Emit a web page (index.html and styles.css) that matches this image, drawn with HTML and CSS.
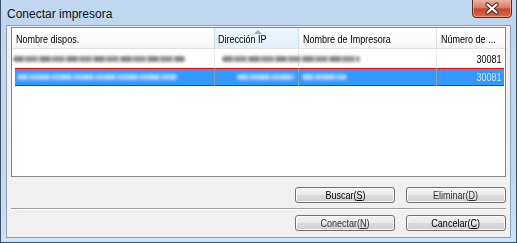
FILE: index.html
```html
<!DOCTYPE html>
<html lang="es">
<head>
<meta charset="utf-8">
<title>Conectar impresora</title>
<link rel="stylesheet" href="styles.css">
</head>
<body>
<div class="window">
  <div class="titlebar">
    <span class="title">Conectar impresora</span>
    <button class="close" aria-label="Cerrar">
      <svg width="40" height="18" viewBox="0 0 40 18">
        <defs>
          <linearGradient id="cg" x1="0" y1="0" x2="0" y2="1">
            <stop offset="0" stop-color="#eab3a5"/>
            <stop offset="0.45" stop-color="#d9765f"/>
            <stop offset="0.5" stop-color="#c8472f"/>
            <stop offset="1" stop-color="#d96a45"/>
          </linearGradient>
        </defs>
        <path d="M0.5 0 V14 Q0.5 17.5 4 17.5 H36 Q39.5 17.5 39.5 14 V0" fill="url(#cg)" stroke="#5e2a22"/>
        <path d="M1.5 0 V13.5 Q1.5 16.5 4.5 16.5 H35.5 Q38.5 16.5 38.5 13.5 V0" fill="none" stroke="#f0b9a8" stroke-opacity="0.6"/>
        <path d="M15.5 4.5 L24.5 12.5 M24.5 4.5 L15.5 12.5" stroke="#4b2119" stroke-width="4.2" stroke-linecap="round"/>
        <path d="M15.5 4.5 L24.5 12.5 M24.5 4.5 L15.5 12.5" stroke="#ffffff" stroke-width="2.2" stroke-linecap="round"/>
      </svg>
    </button>
  </div>
  <div class="client">
    <div class="list">
      <div class="header">
        <div class="hcell"><span class="t">Nombre dispos.</span></div>
        <div class="hcell sorted"><span class="sort-arrow"></span><span class="t">Dirección IP</span></div>
        <div class="hcell"><span class="t">Nombre de Impresora</span></div>
        <div class="hcell last"><span class="t">Número de ...</span></div>
      </div>
      <div class="row">
        <div class="cell"><span class="blob b-r1c1"></span></div>
        <div class="cell"><span class="blob b-r1c2"></span></div>
        <div class="cell"></div>
        <div class="cell num"><span class="t r">30081</span></div>
      </div>
      <div class="row selected">
        <div class="cell"><span class="blob light b-r2c1"></span></div>
        <div class="cell"><span class="blob light b-r2c2"></span></div>
        <div class="cell"><span class="blob light b-r2c3"></span></div>
        <div class="cell num"><span class="t r">30081</span></div>
      </div>
    </div>
    <div class="btnrow">
      <button class="btn"><span class="t c">Buscar(<u>S</u>)</span></button>
      <button class="btn soft"><span class="t c">Eliminar(<u>D</u>)</span></button>
    </div>
    <div class="sep"></div>
    <div class="btnrow">
      <button class="btn soft"><span class="t c">Conectar(<u>N</u>)</span></button>
      <button class="btn"><span class="t c">Cancelar(<u>C</u>)</span></button>
    </div>
  </div>
</div>
</body>
</html>
```
FILE: styles.css
```css
* { box-sizing: border-box; }

body {
  margin: 0;
  width: 517px;
  height: 243px;
  overflow: hidden;
  font-family: "Liberation Sans", Arial, sans-serif;
  font-size: 11px;
  color: #111;
  background: #bcd4ee;
}

.t {
  display: inline-block;
  white-space: nowrap;
  transform: scaleX(0.82);
  transform-origin: left center;
}
.t.r { transform-origin: right center; }
.t.c { transform-origin: center center; }

.window {
  width: 517px;
  height: 243px;
  display: flex;
  flex-direction: column;
  background: linear-gradient(to bottom, #c2d9f1 0, #bed6ef 25px, #c3daf2 200px, #cde2f6 100%);
  border: 1px solid #3f5166;
  border-top: none;
}

.titlebar {
  height: 25px;
  display: flex;
  align-items: flex-start;
  padding-left: 6px;
}

.title {
  font-size: 12px;
  color: #111;
  margin-top: 7px;
}

.close {
  margin-left: auto;
  margin-right: 4px;
  width: 40px;
  height: 18px;
  padding: 0;
  border: none;
  background: none;
  display: block;
}
.close svg { display: block; }

.client {
  margin: 0 5px 4px 5px;
  border: 1px solid #8a9fb9;
  background: #f0f0f0;
  height: 213px;
  padding: 1px 4px 0 4px;
  display: flex;
  flex-direction: column;
}

.list {
  height: 150px;
  border: 1px solid #828790;
  background: #fff;
}

.header,
.row {
  display: grid;
  grid-template-columns: 203px 84px 138px 1fr;
}

.header {
  height: 21px;
  background: linear-gradient(to bottom, #ffffff 0, #fbfbfb 60%, #f4f4f4 100%);
  border-bottom: 1px solid #e2e2e2;
}

.hcell {
  position: relative;
  padding: 5px 0 0 4px;
  white-space: nowrap;
  color: #000;
  border-right: 1px solid #e3e3e3;
}
.hcell.last { border-right: none; }
.hcell.sorted {
  background: linear-gradient(to bottom, #edf6fd 0, #e2f0fb 100%);
  border-left: 1px solid #c6e1f5;
  border-right: 1px solid #c6e1f5;
  padding-left: 3px;
  margin-left: -1px;
}

.sort-arrow {
  position: absolute;
  left: 39px;
  top: 2px;
  width: 0;
  height: 0;
  border-left: 4px solid transparent;
  border-right: 4px solid transparent;
  border-bottom: 4px solid #98adc3;
}

.row {
  height: 19px;
  align-items: center;
}
.row .cell {
  height: 100%;
  display: flex;
  align-items: center;
  border-right: 1px solid #ececec;
}
.row .cell:last-child { border-right: none; }
.row .num {
  justify-content: flex-end;
  padding-right: 3px;
  color: #000;
}

.row.selected {
  height: 18px;
  background:
    linear-gradient(to bottom, #ff0000 0, #ff0000 1px, #3399ff 1px, #3399ff 17px, #ff0000 17px, #ff0000 18px)
    3px 0 / calc(100% - 4px) 100% no-repeat;
}
.row.selected .cell { border-right-color: #8b9db3; }
.row.selected .cell:first-child { border-right-color: #8d98a6; }
.row.selected .num { color: #d6e8fd; }

.blob {
  display: block;
  height: 6px;
  flex: none;
  border-radius: 3px;
  filter: blur(1.8px);
  background: repeating-linear-gradient(90deg,
    rgba(95,95,95,0.75) 0, rgba(95,95,95,0.75) 10px,
    rgba(135,135,135,0.6) 10px, rgba(135,135,135,0.6) 13px,
    rgba(105,105,105,0.7) 13px, rgba(105,105,105,0.7) 24px,
    rgba(150,150,150,0.55) 24px, rgba(150,150,150,0.55) 27px);
}
.blob.light {
  background: repeating-linear-gradient(90deg,
    rgba(205,228,255,0.8) 0, rgba(205,228,255,0.8) 10px,
    rgba(170,210,255,0.6) 10px, rgba(170,210,255,0.6) 13px,
    rgba(195,222,255,0.75) 13px, rgba(195,222,255,0.75) 22px);
}
.b-r1c1 { width: 172px; margin-left: 1px; }
.b-r1c2 { width: 138px; margin-left: 7px; }
.b-r2c1 { width: 160px; margin-left: 5px; }
.b-r2c2 { width: 58px; margin-left: 22px; }
.b-r2c3 { width: 45px; margin-left: 3px; }

.btnrow {
  display: flex;
  justify-content: flex-end;
  gap: 11px;
  margin-top: 10px;
}
.sep + .btnrow { margin-top: 5px; }

.btn {
  width: 100px;
  height: 16px;
  padding: 0;
  font-family: inherit;
  font-size: 11px;
  color: #000;
  border: 1px solid #707070;
  border-radius: 3px;
  box-shadow: inset 0 0 0 1px #fcfcfc;
  background: linear-gradient(to bottom, #f2f2f2 0, #ebebeb 50%, #dddddd 50%, #cfcfcf 100%);
  line-height: 13px;
}
.btn.soft { color: #333; }
.btn u { text-underline-offset: 1px; }

.sep {
  margin-top: 5px;
  height: 2px;
  border-top: 1px solid #a0a0a0;
  border-bottom: 1px solid #ffffff;
}
```
